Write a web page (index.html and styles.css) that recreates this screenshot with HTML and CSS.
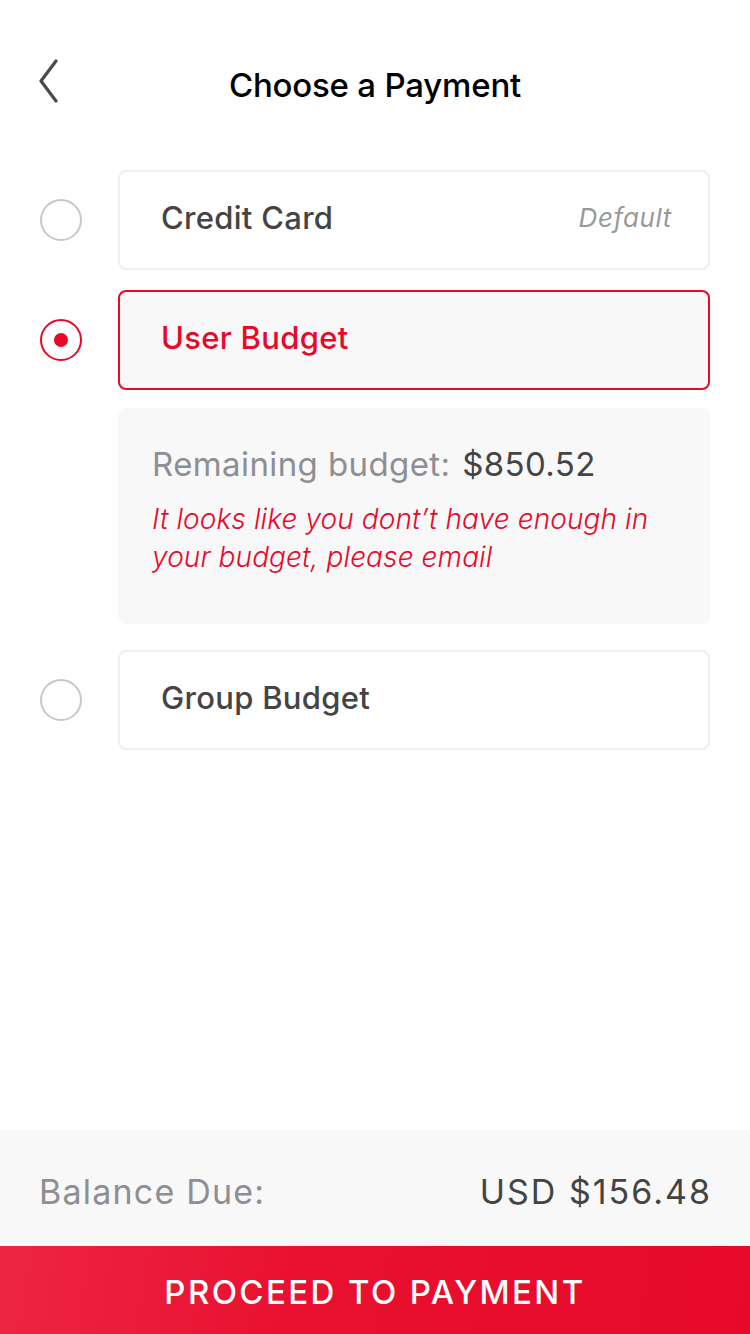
FILE: index.html
```html
<!DOCTYPE html>
<html>
<head>
<meta charset="utf-8">
<link rel="stylesheet" href="styles.css">
</head>
<body>
<div class="screen">
  <header class="header">
    <svg class="back" width="24" height="44" viewBox="0 0 24 44"><path d="M20 2 L5 22 L20 42" fill="none" stroke="#4a4a4a" stroke-width="3.2" stroke-linecap="round" stroke-linejoin="round"/></svg>
    <h1 class="title">Choose a Payment</h1>
  </header>
  <main class="options">
    <div class="row">
      <span class="radio"></span>
      <div class="card"><span class="label">Credit Card</span><span class="tag">Default</span></div>
    </div>
    <div class="row">
      <span class="radio selected"></span>
      <div class="card active"><span class="label">User Budget</span></div>
    </div>
    <div class="info">
      <p class="remaining">Remaining budget: <span class="amount">$850.52</span></p>
      <p class="warning">It looks like you dont’t have enough in your budget, please email</p>
    </div>
    <div class="row group">
      <span class="radio"></span>
      <div class="card"><span class="label">Group Budget</span></div>
    </div>
  </main>
  <footer class="footer">
    <div class="balance"><span class="bal-label">Balance Due:</span><span class="bal-value">USD $156.48</span></div>
    <button class="proceed">PROCEED TO PAYMENT</button>
  </footer>
</div>
</body>
</html>
```
FILE: styles.css
```css
* { box-sizing: border-box; }
html, body { margin: 0; padding: 0; }
body { font-family: Inter, Roboto, "Liberation Sans", sans-serif; background: #fff; }
.screen { width: 750px; height: 1334px; display: flex; flex-direction: column; overflow: hidden; }
.header { height: 170px; position: relative; display: flex; justify-content: center; padding-top: 61px; }
.back { position: absolute; left: 36px; top: 59px; }
.title { margin: 0; font-size: 33px; font-weight: 500; color: #000; letter-spacing: -0.2px; line-height: 48px; }
.options { display: flex; flex-direction: column; padding: 0 40px; }
.row { display: flex; align-items: center; gap: 36px; margin-bottom: 20px; }
.radio { width: 42px; height: 42px; border-radius: 50%; border: 2px solid #c8c8c8; flex: none; display: flex; align-items: center; justify-content: center; }
.radio.selected { border-color: #e8092a; }
.radio.selected::after { content: ""; width: 14px; height: 14px; border-radius: 50%; background: #e8092a; }
.card { flex: 1; height: 100px; border: 2px solid #efefef; border-radius: 8px; display: flex; align-items: center; justify-content: space-between; padding: 0 36px 6px 41px; }
.card.active { border-color: #e8092a; background: #f8f8f8; }
.label { font-size: 31px; font-weight: 500; color: #444; letter-spacing: 0.3px; }
.card.active .label { color: #e8092a; }
.tag { font-size: 26px; font-style: italic; color: #999; letter-spacing: 0.6px; }
.info { margin-left: 78px; margin-bottom: 26px; margin-top: -2px; height: 216px; background: #f8f8f8; border-radius: 8px; padding: 34px 30px 0 34px; }
.remaining { margin: 0; font-size: 33px; color: #8e8e93; line-height: 44px; letter-spacing: 0.4px; }
.amount { color: #444; margin-left: 2px; }
.warning { margin: 14px 0 0; font-size: 28px; font-weight: 300; font-style: italic; color: #e8092a; line-height: 38px; letter-spacing: 0.1px; }
.footer { margin-top: auto; }
.balance { height: 116px; background: #f8f8f8; display: flex; align-items: center; justify-content: space-between; padding: 6px 38px 0 39px; }
.bal-label { font-size: 34px; color: #8e8e93; letter-spacing: 1.2px; }
.bal-value { font-size: 34px; color: #444; font-weight: 400; letter-spacing: 2px; }
.proceed { display: block; width: 100%; height: 88px; border: 0; margin: 0; background: linear-gradient(100deg, #ed2543 0%, #e9102f 40%, #e8092a 100%); color: #fff; font-family: inherit; font-size: 33px; font-weight: 500; letter-spacing: 2.4px; padding-top: 4px; }
```
